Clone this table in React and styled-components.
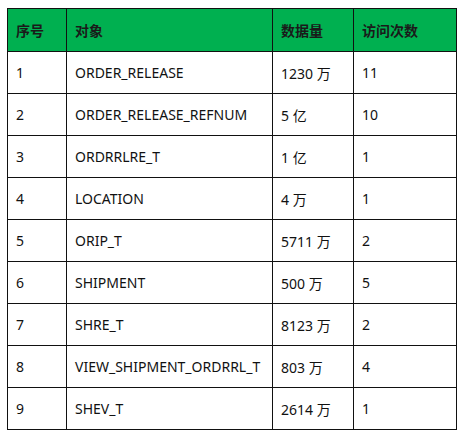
import React from "react";
import styled, { createGlobalStyle } from "styled-components";

const Global = createGlobalStyle`
  html, body { margin: 0; padding: 0; background: #fff; }
  body { font-family: "Noto Sans", "Noto Sans CJK SC", sans-serif; }
`;

const Page = styled.div`
  padding: 8px 0 0 7px;
`;

const Table = styled.table`
  border-collapse: collapse;
  table-layout: fixed;
  width: 449px;
  font-size: 14px;
  color: #111;
`;

const Col = styled.col`
  width: ${(p) => p.$w}px;
`;

const HeadCell = styled.th`
  background: #00b050;
  border: 1.5px solid #111;
  height: 42px;
  padding: 0 0 0 8px;
  text-align: left;
  font-family: "Noto Sans CJK SC", sans-serif;
  font-weight: 700;
  font-size: 14px;
  color: #1a1a1a;
`;

const Cell = styled.td`
  border: 1.5px solid #111;
  height: 41px;
  padding: 0 0 0 8px;
  text-align: left;
  white-space: nowrap;
  font-family: "Noto Sans", "Noto Sans CJK SC", sans-serif;
`;

const widths = [59, 206, 81, 103];
const headers = ["序号", "对象", "数据量", "访问次数"];
const rows = [
  ["1", "ORDER_RELEASE", "1230 万", "11"],
  ["2", "ORDER_RELEASE_REFNUM", "5 亿", "10"],
  ["3", "ORDRRLRE_T", "1 亿", "1"],
  ["4", "LOCATION", "4 万", "1"],
  ["5", "ORIP_T", "5711 万", "2"],
  ["6", "SHIPMENT", "500 万", "5"],
  ["7", "SHRE_T", "8123 万", "2"],
  ["8", "VIEW_SHIPMENT_ORDRRL_T", "803 万", "4"],
  ["9", "SHEV_T", "2614 万", "1"],
];

export default function App() {
  return (
    <Page>
      <Global />
      <Table>
        <colgroup>
          {widths.map((w, i) => (
            <Col key={i} $w={w} />
          ))}
        </colgroup>
        <thead>
          <tr>
            {headers.map((h) => (
              <HeadCell key={h}>{h}</HeadCell>
            ))}
          </tr>
        </thead>
        <tbody>
          {rows.map((r) => (
            <tr key={r[0]}>
              {r.map((c, i) => (
                <Cell key={i}>{c}</Cell>
              ))}
            </tr>
          ))}
        </tbody>
      </Table>
    </Page>
  );
}
